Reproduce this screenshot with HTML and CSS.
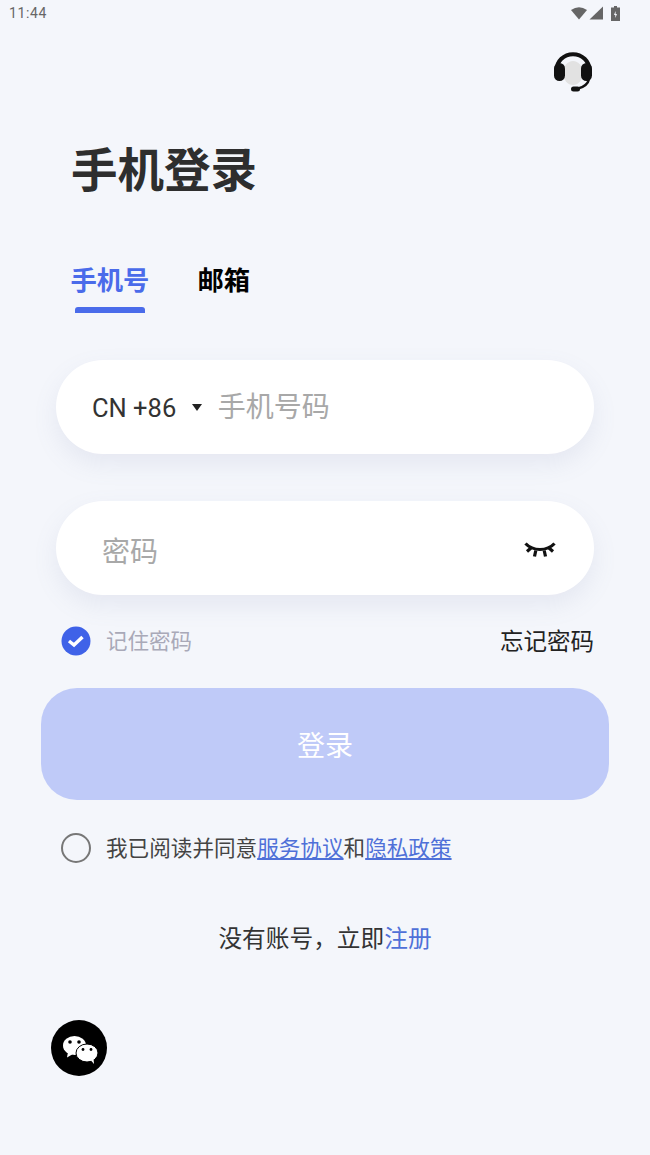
FILE: index.html
```html
<!doctype html>
<html>
<head>
<meta charset="utf-8">
<link rel="stylesheet" href="styles.css">
<title>手机登录</title>
</head>
<body>

    <div class="status-bar">
        <span class="time">11:44</span>
        <div class="status-icons">
            <svg width="16" height="14" viewBox="0 0 16 14"><path d="M0 4Q8 -1.500 16 4L8 13.500Z" fill="#666"/></svg>
            <svg class="signal" width="14" height="14" viewBox="0 0 14 14"><path d="M14 0.500V13.500H0.500Z" fill="#666"/></svg>
            <svg width="9" height="15" viewBox="0 0 9 15"><path d="M3 0H6V1.500H9V15H0V1.500H3Z" fill="#666"/><path d="M4.500 5L3 9H4.300V12L6 8H4.700Z" fill="#f4f6fb"/></svg>
        </div>
    </div>

    <div class="top-bar">
        <svg class="headset" width="40" height="40" viewBox="0 0 40 40">
            <ellipse cx="20" cy="21" rx="10" ry="12" fill="#e2e2e2"/>
            <path d="M3.500 20V18.500C3.500 9 11 2.200 20 2.200S36.500 9 36.500 18.500V20" fill="none" stroke="#111" stroke-width="4"/>
            <rect x="1" y="11" width="11" height="18" rx="5.500" fill="#111"/>
            <rect x="28" y="11" width="11" height="18" rx="5.500" fill="#111"/>
            <path d="M36 27C35 32 31 35 25 36.500" fill="none" stroke="#111" stroke-width="2.500"/>
            <rect x="18" y="34.500" width="9" height="5" rx="2.500" fill="#111"/>
        </svg>
    </div>

    <h1>手机登录</h1>

    <div class="tabs">
        <div class="tab active">手机号</div>
        <div class="tab">邮箱</div>
    </div>

    <div class="field">
        <span class="country">CN +86</span>
        <span class="caret"></span>
        <span class="placeholder">手机号码</span>
    </div>

    <div class="field password">
        <span class="placeholder">密码</span>
        <svg class="eye" width="34" height="16" viewBox="0 0 34 16" fill="none" stroke="#111" stroke-width="3.200">
            <path d="M2.500 1.500C10 9.500 24 9.500 31.500 1.500"/>
            <path d="M4 9.500L8 6M11.500 14.500L12.800 8.500M22.500 14.500L21.200 8.500M30 9.500L26 6"/>
        </svg>
    </div>

    <div class="remember">
        <label class="check">
            <svg width="30" height="30" viewBox="0 0 30 30"><circle cx="15" cy="15" r="14.500" fill="#3f62e8"/><path d="M8 15L13 19L21.500 11" fill="none" stroke="#fff" stroke-width="3.500"/></svg>
            <span class="check-label">记住密码</span>
        </label>
        <a href="#" class="forgot">忘记密码</a>
    </div>

    <button class="login">登录</button>

    <div class="agree">
        <span class="radio"></span>
        <span class="agree-text">我已阅读并同意<a href="#">服务协议</a>和<a href="#">隐私政策</a></span>
    </div>

    <p class="register">没有账号，立即<a href="#">注册</a></p>

    <div class="wechat">
        <svg width="56" height="56" viewBox="0 0 56 56">
            <circle cx="28" cy="28" r="28" fill="#000"/>
            <ellipse cx="23.500" cy="25.500" rx="11.500" ry="9.500" fill="#fff"/>
            <path d="M17 32L16 37.500L22 34Z" fill="#fff"/>
            <ellipse cx="36" cy="33" rx="11" ry="9" fill="#fff" stroke="#000"/>
            <path d="M40 40.500L43 44L42.500 38.500Z" fill="#fff"/>
            <circle cx="19" cy="22" r="1.800" fill="#000"/>
            <circle cx="28" cy="22" r="1.800" fill="#000"/>
            <circle cx="32" cy="29.500" r="1.400" fill="#000"/>
            <circle cx="40" cy="29.500" r="1.400" fill="#000"/>
        </svg>
    </div>

</body>
</html>
```

FILE: styles.css
```css
html
{
    background:#f4f6fb;
}
body
{
    margin:0;
    height:1155px;
    overflow:hidden;
    color:#333;
    font-family:"Noto Sans CJK SC", sans-serif;
}
a
{
    color:#4f70d8;
}
.status-bar
{
    display:flex;
    justify-content:space-between;
    align-items:center;
    height:26px;
    padding:0 30px 0 9px;
}
.time
{
    font:14px/27px Roboto, sans-serif;
    color:#666;
    letter-spacing:0.6px;
}
.status-icons
{
    display:flex;
    align-items:center;
    gap:2px;
}
.signal
{
    margin-right:6px;
}
.top-bar
{
    display:flex;
    justify-content:flex-end;
    padding:26px 57px 0 0;
}
.headset
{
    display:block;
}
h1
{
    margin:36px 0 0 71px;
    font-size:46.500px;
    line-height:78px;
    font-weight:700;
    color:#2e2e2e;
}
.tabs
{
    display:flex;
    gap:48px;
    margin:54px 0 0 70.500px;
}
.tab
{
    position:relative;
    font-size:26.300px;
    line-height:38px;
    font-weight:700;
    color:#000;
}
.tab.active
{
    color:#4a6bea;
}
.tab.active::after
{
    content:"";
    position:absolute;
    left:4px;
    right:4px;
    top:47px;
    height:6px;
    border-radius:3px 3px 0 0;
    background:#4a6bea;
}
.field
{
    display:flex;
    align-items:center;
    height:94px;
    margin:0 56px;
    padding:0 36px;
    border-radius:47px;
    background:#fff;
    box-shadow:0 10px 24px rgba(120,130,170,.12);
}
.tabs + .field
{
    margin-top:62px;
}
.password
{
    justify-content:space-between;
    margin-top:47px;
    padding:0 36px 0 46px;
}
.country
{
    font:25.500px Roboto, sans-serif;
    color:#333;
    padding-top:2px;
}
.caret
{
    width:0;
    height:0;
    margin:0 15.500px 0 16px;
    border:5px solid transparent;
    border-top:7px solid #222;
    border-bottom:0;
}
.placeholder
{
    font-size:28px;
    color:#a8a8a8;
    margin-bottom:4px;
}
.password .placeholder
{
    margin:4px 0 0;
}
.eye
{
    margin:3px 1px 0 0;
}
.remember
{
    display:flex;
    justify-content:space-between;
    align-items:center;
    height:30px;
    margin:31px 56px 0 61px;
}
.check
{
    display:flex;
    align-items:center;
    gap:15px;
    font-size:21.500px;
    color:#a9a9b8;
}
.check-label
{
    margin-top:-3px;
}
.forgot
{
    font-size:23.500px;
    color:#222;
    text-decoration:none;
    margin-top:-2px;
}
.login
{
    display:block;
    width:568px;
    height:112px;
    margin:32px 0 0 41px;
    border:none;
    border-radius:36px;
    background:#bfcaf8;
    color:#fff;
    font:28px "Noto Sans CJK SC", sans-serif;
}
.agree
{
    display:flex;
    align-items:center;
    gap:15px;
    margin:33px 0 0 61px;
    font-size:21.600px;
    line-height:30px;
    color:#444;
}
.agree-text
{
    margin-top:-2px;
}
.radio
{
    box-sizing:border-box;
    width:30px;
    height:30px;
    border:2px solid #777;
    border-radius:50%;
}
.register
{
    margin:57px 0 0;
    text-align:center;
    font-size:23.700px;
    line-height:34px;
    color:#333;
}
.register a
{
    text-decoration:none;
}
.wechat
{
    margin:66px 0 0 51px;
}
.wechat svg
{
    display:block;
}
```
